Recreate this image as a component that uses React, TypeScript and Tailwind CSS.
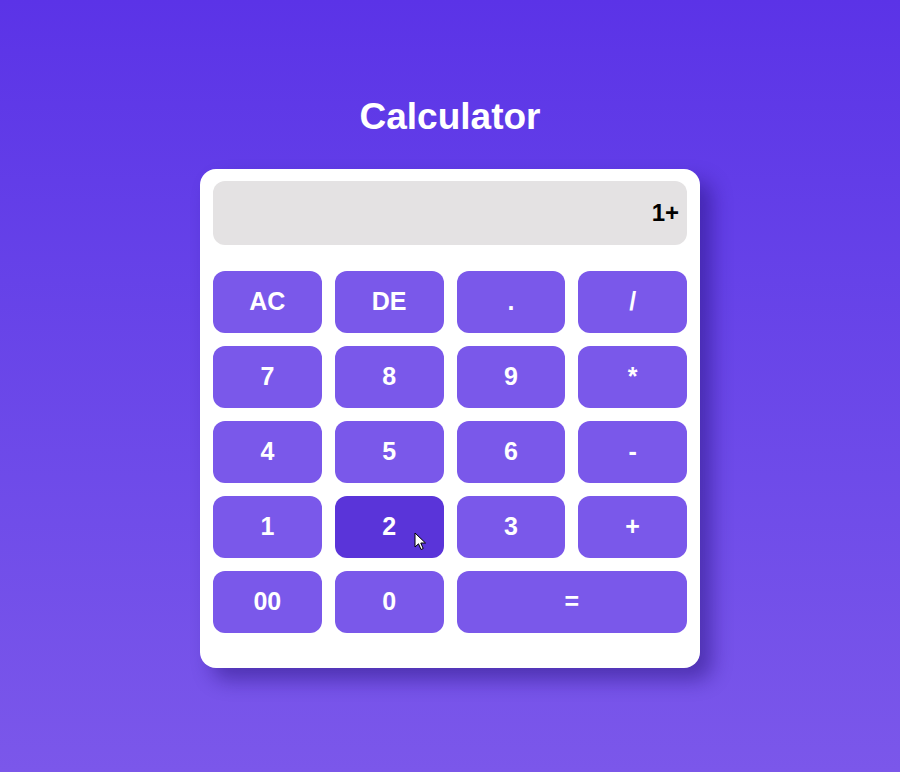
const KEYS: { label: string; wide?: boolean; active?: boolean }[] = [
  { label: 'AC' },
  { label: 'DE' },
  { label: '.' },
  { label: '/' },
  { label: '7' },
  { label: '8' },
  { label: '9' },
  { label: '*' },
  { label: '4' },
  { label: '5' },
  { label: '6' },
  { label: '-' },
  { label: '1' },
  { label: '2', active: true },
  { label: '3' },
  { label: '+' },
  { label: '00' },
  { label: '0' },
  { label: '=', wide: true },
]

function Pointer() {
  return (
    <svg
      className="pointer-events-none absolute left-[79px] top-[36px]"
      width="13"
      height="19"
      viewBox="0 0 13 19"
      aria-hidden
    >
      <path
        d="M1 1 L1 15 L4.5 11.8 L7 17.5 L9.2 16.5 L6.8 11 L11.5 11 Z"
        fill="#fff"
        stroke="#000"
        strokeWidth="1"
        strokeLinejoin="round"
      />
    </svg>
  )
}

export default function App() {
  return (
    <div className="flex min-h-[772px] w-full flex-col items-center bg-gradient-to-b from-[#5b33e7] to-[#7b57ea] font-['Liberation_Sans',Arial,sans-serif]">
      <h1 className="mt-[95px] text-[37px] font-bold leading-[44px] text-white">
        Calculator
      </h1>

      <div className="mt-[30px] w-[500px] rounded-[16px] bg-white px-[13px] pb-[35px] pt-[12px] shadow-[12px_12px_20px_rgba(30,10,110,0.45)]">
        <div className="flex h-[64px] items-center justify-end rounded-[12px] bg-[#e4e2e3] pr-[8px] text-[24px] font-bold text-black">
          1+
        </div>

        <div className="mt-[26px] grid grid-cols-4 gap-[13px]">
          {KEYS.map((k) => (
            <button
              key={k.label}
              type="button"
              className={`relative flex h-[62px] items-center justify-center rounded-[12px] text-[25px] font-bold text-white ${
                k.wide ? 'col-span-2' : ''
              } ${k.active ? 'bg-[#5a34d9]' : 'bg-[#7a58ea]'}`}
            >
              {k.label}
              {k.active && <Pointer />}
            </button>
          ))}
        </div>
      </div>
    </div>
  )
}
